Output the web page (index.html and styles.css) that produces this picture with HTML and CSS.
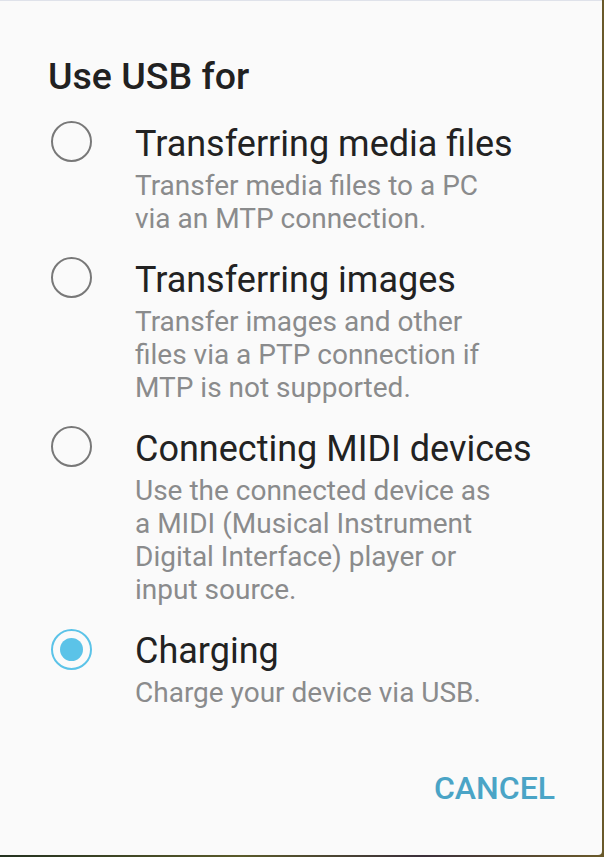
FILE: index.html
```html
<!DOCTYPE html>
<html>
<head>
<meta charset="utf-8">
<link rel="stylesheet" href="styles.css">
</head>
<body>
<div class="dialog">
  <h1 class="heading">Use USB for</h1>
  <ul class="options">
    <li class="option">
      <span class="radio"></span>
      <div class="text">
        <div class="title">Transferring media files</div>
        <div class="desc">Transfer media files to a PC<br>via an MTP connection.</div>
      </div>
    </li>
    <li class="option">
      <span class="radio"></span>
      <div class="text">
        <div class="title">Transferring images</div>
        <div class="desc">Transfer images and other<br>files via a PTP connection if<br>MTP is not supported.</div>
      </div>
    </li>
    <li class="option">
      <span class="radio"></span>
      <div class="text">
        <div class="title">Connecting MIDI devices</div>
        <div class="desc">Use the connected device as<br>a MIDI (Musical Instrument<br>Digital Interface) player or<br>input source.</div>
      </div>
    </li>
    <li class="option">
      <span class="radio checked"></span>
      <div class="text">
        <div class="title">Charging</div>
        <div class="desc">Charge your device via USB.</div>
      </div>
    </li>
  </ul>
  <div class="actions">
    <span class="cancel">CANCEL</span>
  </div>
</div>
</body>
</html>
```

FILE: styles.css
```css
html, body {
  margin: 0;
  padding: 0;
}
body {
  width: 604px;
  height: 857px;
  background: linear-gradient(90deg, #23311f 0%, #5a5a2a 40%, #3b2f3a 70%, #6a5a2a 100%);
  overflow: hidden;
  font-family: Roboto, "Noto Sans", sans-serif;
}
.dialog {
  box-sizing: border-box;
  width: 602px;
  height: 855px;
  background: #fafafa;
  border-top: 1px solid #dfe2ea;
  border-bottom-right-radius: 4px;
  padding: 55px 0 0 48px;
}
.heading {
  margin: 0;
  font-size: 37.5px;
  font-weight: 500;
  line-height: 40px;
  color: #212121;
}
.options {
  list-style: none;
  margin: 23px 0 0;
  padding: 0 0 0 3px;
  display: flex;
  flex-direction: column;
  gap: 20px;
}
.option {
  display: flex;
  align-items: flex-start;
  gap: 43px;
}
.radio {
  box-sizing: border-box;
  flex: none;
  width: 41px;
  height: 41px;
  margin-top: 2px;
  border: 2.5px solid #787878;
  border-radius: 50%;
  display: flex;
  align-items: center;
  justify-content: center;
}
.radio.checked {
  margin-top: 3px;
  border: 2px solid #5bc3e8;
}
.radio.checked::after {
  content: "";
  width: 23px;
  height: 23px;
  border-radius: 50%;
  background: #5bc3e8;
}
.title {
  font-size: 36px;
  line-height: 51px;
  color: #222222;
}
.desc {
  margin-top: -1px;
  font-size: 28px;
  line-height: 33px;
  color: #8a8b8c;
}
.actions {
  display: flex;
  justify-content: flex-end;
  padding-right: 47px;
  margin-top: 59px;
}
.cancel {
  font-size: 32px;
  font-weight: 500;
  line-height: 40px;
  color: #4aa4c6;
}
```
